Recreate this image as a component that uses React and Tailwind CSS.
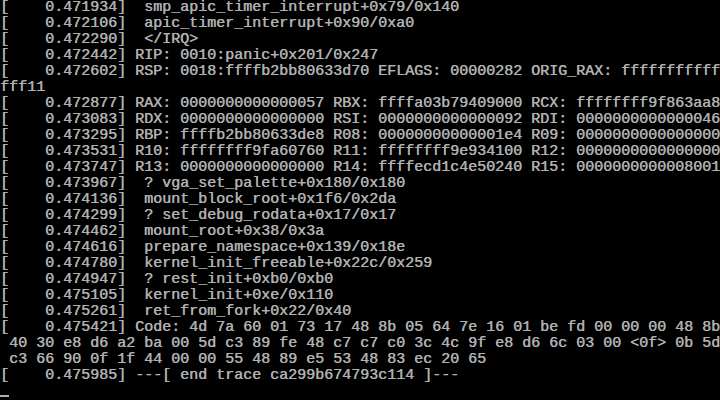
import React from "react";

const lines = [
  "[    0.471934]  smp_apic_timer_interrupt+0x79/0x140",
  "[    0.472106]  apic_timer_interrupt+0x90/0xa0",
  "[    0.472290]  </IRQ>",
  "[    0.472442] RIP: 0010:panic+0x201/0x247",
  "[    0.472602] RSP: 0018:ffffb2bb80633d70 EFLAGS: 00000282 ORIG_RAX: fffffffffff",
  "fff11",
  "[    0.472877] RAX: 0000000000000057 RBX: ffffa03b79409000 RCX: ffffffff9f863aa8",
  "[    0.473083] RDX: 0000000000000000 RSI: 0000000000000092 RDI: 0000000000000046",
  "[    0.473295] RBP: ffffb2bb80633de8 R08: 00000000000001e4 R09: 0000000000000000",
  "[    0.473531] R10: ffffffff9fa60760 R11: ffffffff9e934100 R12: 0000000000000000",
  "[    0.473747] R13: 0000000000000000 R14: ffffecd1c4e50240 R15: 0000000000008001",
  "[    0.473967]  ? vga_set_palette+0x180/0x180",
  "[    0.474136]  mount_block_root+0x1f6/0x2da",
  "[    0.474299]  ? set_debug_rodata+0x17/0x17",
  "[    0.474462]  mount_root+0x38/0x3a",
  "[    0.474616]  prepare_namespace+0x139/0x18e",
  "[    0.474780]  kernel_init_freeable+0x22c/0x259",
  "[    0.474947]  ? rest_init+0xb0/0xb0",
  "[    0.475105]  kernel_init+0xe/0x110",
  "[    0.475261]  ret_from_fork+0x22/0x40",
  "[    0.475421] Code: 4d 7a 60 01 73 17 48 8b 05 64 7e 16 01 be fd 00 00 00 48 8b",
  " 40 30 e8 d6 a2 ba 00 5d c3 89 fe 48 c7 c7 c0 3c 4c 9f e8 d6 6c 03 00 <0f> 0b 5d",
  " c3 66 90 0f 1f 44 00 00 55 48 89 e5 53 48 83 ec 20 65",
  "[    0.475985] ---[ end trace ca299b674793c114 ]---",
];

export default function App() {
  return (
    <div className="w-[720px] h-[400px] bg-black overflow-hidden text-[#b0b0b0] font-['Liberation_Mono',monospace] text-[15px] leading-[16px] [text-shadow:0.5px_0_0_#b0b0b0]">
      {lines.map((l, i) => (
        <div key={i} className="h-4 whitespace-pre">
          {l}
        </div>
      ))}
      <div className="h-4 flex flex-col">
        <div className="h-[11px]" />
        <div className="w-[9px] h-[2px] bg-[#b0b0b0]" />
      </div>
    </div>
  );
}
